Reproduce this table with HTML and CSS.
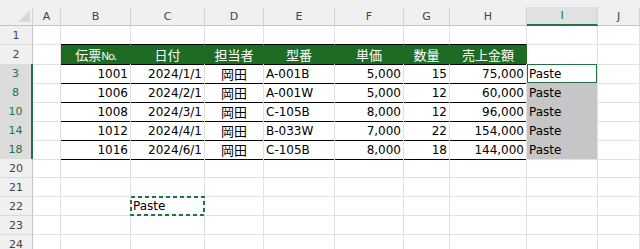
FILE: index.html
```html
<!DOCTYPE html>
<html lang="ja">
<head>
    <meta charset="UTF-8">
    <title>売上一覧</title>
    <link rel="stylesheet" href="styles.css">
</head>
<body>
    <div class="sheet">
        <div class="strip"></div>

        <!-- column letters -->
        <div class="row colhead">
            <div class="corner"><span class="tri"></span></div>
            <div>A</div><div>B</div><div>C</div><div>D</div><div>E</div>
            <div>F</div><div>G</div><div>H</div><div class="cur">I</div><div>J</div>
        </div>

        <div class="row">
            <div class="rh">1</div><div></div>
            <div class="ln"></div><div class="ln"></div><div class="ln"></div><div class="ln"></div>
            <div class="ln"></div><div class="ln"></div><div class="ln"></div>
            <div></div><div></div>
        </div>

        <!-- table header -->
        <div class="row">
            <div class="rh">2</div><div></div>
            <div class="th">伝票<span class="no">No.</span></div><div class="th">日付</div><div class="th">担当者</div>
            <div class="th">型番</div><div class="th">単価</div><div class="th">数量</div>
            <div class="th">売上金額</div>
            <div></div><div></div>
        </div>

        <div class="row">
            <div class="rh sel">3</div><div></div>
            <div class="ln num">1001</div><div class="ln num">2024/1/1</div><div class="ln jp">岡田</div>
            <div class="ln">A-001B</div><div class="ln num">5,000</div><div class="ln num">15</div>
            <div class="ln num">75,000</div>
            <div class="active">Paste</div><div></div>
        </div>
        <div class="row">
            <div class="rh sel">8</div><div></div>
            <div class="ln num">1006</div><div class="ln num">2024/2/1</div><div class="ln jp">岡田</div>
            <div class="ln">A-001W</div><div class="ln num">5,000</div><div class="ln num">12</div>
            <div class="ln num">60,000</div>
            <div class="hl">Paste</div><div></div>
        </div>
        <div class="row">
            <div class="rh sel">10</div><div></div>
            <div class="ln num">1008</div><div class="ln num">2024/3/1</div><div class="ln jp">岡田</div>
            <div class="ln">C-105B</div><div class="ln num">8,000</div><div class="ln num">12</div>
            <div class="ln num">96,000</div>
            <div class="hl">Paste</div><div></div>
        </div>
        <div class="row">
            <div class="rh sel">14</div><div></div>
            <div class="ln num">1012</div><div class="ln num">2024/4/1</div><div class="ln jp">岡田</div>
            <div class="ln">B-033W</div><div class="ln num">7,000</div><div class="ln num">22</div>
            <div class="ln num">154,000</div>
            <div class="hl">Paste</div><div></div>
        </div>
        <div class="row">
            <div class="rh sel">18</div><div></div>
            <div class="ln num">1016</div><div class="ln num">2024/6/1</div><div class="ln jp">岡田</div>
            <div class="ln">C-105B</div><div class="ln num">8,000</div><div class="ln num">18</div>
            <div class="ln num">144,000</div>
            <div class="hl">Paste</div><div></div>
        </div>

        <div class="row">
            <div class="rh">20</div><div></div><div></div><div></div><div></div><div></div>
            <div></div><div></div><div></div><div></div><div></div>
        </div>
        <div class="row">
            <div class="rh">21</div><div></div><div></div><div></div><div></div><div></div>
            <div></div><div></div><div></div><div></div><div></div>
        </div>
        <div class="row">
            <div class="rh">22</div><div></div><div></div>
            <div class="copied">Paste
                <!-- copy marquee -->
                <svg class="ants" width="75" height="20" viewBox="0 0 75 20">
                    <rect x="1" y="1" width="73" height="18" fill="none" stroke="#217346" stroke-width="2" stroke-dasharray="4 3"/>
                </svg>
            </div>
            <div></div><div></div><div></div><div></div><div></div><div></div><div></div>
        </div>
        <div class="row">
            <div class="rh">23</div><div></div><div></div><div></div><div></div><div></div>
            <div></div><div></div><div></div><div></div><div></div>
        </div>
        <div class="row">
            <div class="rh">24</div><div></div><div></div><div></div><div></div><div></div>
            <div></div><div></div><div></div><div></div><div></div>
        </div>
    </div>
</body>
</html>
```

FILE: styles.css
```css
body {
    margin: 0;
    background: #fff;
    color: #000;
    font-family: "DejaVu Sans", "Noto Sans CJK JP", sans-serif;
    font-size: 12px;
    overflow: hidden;
}
.strip {
    height: 7px;
    background: #f0f0f0;
}
.row {
    display: grid;
    grid-template-columns: 33px 28px 70px 74px 59px 71px 69px 46px 77px 71px 1fr;
    height: 19px;
}
.row > div {
    box-sizing: border-box;
    display: flex;
    align-items: center;
    padding: 0 2px;
    white-space: nowrap;
    border-right: 1px solid #e1e1e1;
    border-bottom: 1px solid #e1e1e1;
}

/* headers */
.colhead > div {
    justify-content: center;
    background: #f0f0f0;
    color: #444;
    font-size: 11px;
    border-right-color: #d4d4d4;
    border-bottom-color: #c4c4c4;
}
.colhead > .cur {
    background: #e1e1e1;
    color: #217346;
    border-bottom: 2px solid #217346;
}
.colhead > .corner {
    justify-content: flex-end;
    align-items: flex-end;
    padding: 0 2px 3px 0;
}
.tri {
    width: 0;
    height: 0;
    border-left: 12px solid transparent;
    border-bottom: 12px solid #d8d8d8;
}
.row > .rh {
    justify-content: center;
    background: #f0f0f0;
    color: #444;
    font-size: 11px;
    border-right-color: #c4c4c4;
    border-bottom-color: #d8d8d8;
}
.row > .rh.sel {
    background: #dcdcdc;
    color: #217346;
    border-right: 2px solid #217346;
}

/* table */
.row > .ln {
    border-bottom-color: #000;
}
.row > .th {
    justify-content: center;
    background: #1e6b24;
    color: #fff;
    font-family: "Noto Sans CJK JP", sans-serif;
    font-size: 13px;
    border-right-color: #1e6b24;
    border-bottom-color: #000;
}
.no {
    font-size: 11px;
    letter-spacing: -1px;
}
.num {
    justify-content: flex-end;
}
.row > .jp {
    justify-content: center;
    font-family: "Noto Sans CJK JP", sans-serif;
    font-size: 13px;
}

/* selection */
.active {
    box-shadow: inset 0 0 0 1px #217346;
}
.row > .hl {
    background: #c6c6c6;
}
.copied {
    position: relative;
}
.ants {
    position: absolute;
    left: -1px;
    top: -1px;
}
```
